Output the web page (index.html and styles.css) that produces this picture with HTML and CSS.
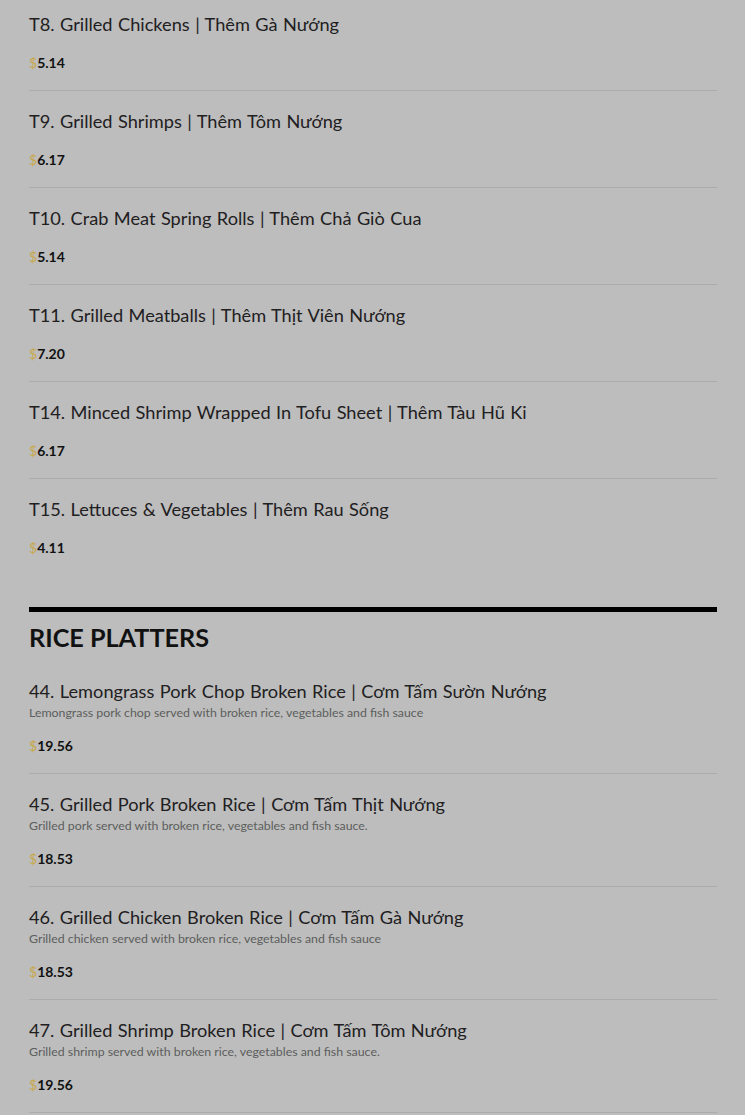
FILE: index.html
```html
<!DOCTYPE html>
<html lang="en">
<head>
<meta charset="utf-8">
<title>Menu</title>
<link rel="stylesheet" href="styles.css">
</head>
<body>
<main class="menu">
  <section class="section">
    <div class="item item--first">
      <div class="item-title">T8. Grilled Chickens | Thêm Gà Nướng</div>
      <div class="price"><span class="cur">$</span>5.14</div>
    </div>
    <div class="item">
      <div class="item-title">T9. Grilled Shrimps | Thêm Tôm Nướng</div>
      <div class="price"><span class="cur">$</span>6.17</div>
    </div>
    <div class="item">
      <div class="item-title">T10. Crab Meat Spring Rolls | Thêm Chả Giò Cua</div>
      <div class="price"><span class="cur">$</span>5.14</div>
    </div>
    <div class="item">
      <div class="item-title">T11. Grilled Meatballs | Thêm Thịt Viên Nướng</div>
      <div class="price"><span class="cur">$</span>7.20</div>
    </div>
    <div class="item">
      <div class="item-title">T14. Minced Shrimp Wrapped In Tofu Sheet | Thêm Tàu Hũ Ki</div>
      <div class="price"><span class="cur">$</span>6.17</div>
    </div>
    <div class="item item--last">
      <div class="item-title">T15. Lettuces &amp; Vegetables | Thêm Rau Sống</div>
      <div class="price"><span class="cur">$</span>4.11</div>
    </div>
  </section>
  <section class="section section--titled">
    <h2 class="section-title">RICE PLATTERS</h2>
    <div class="item item--top">
      <div class="item-title">44. Lemongrass Pork Chop Broken Rice | Cơm Tấm Sườn Nướng</div>
      <div class="item-desc">Lemongrass pork chop served with broken rice, vegetables and fish sauce</div>
      <div class="price"><span class="cur">$</span>19.56</div>
    </div>
    <div class="item">
      <div class="item-title">45. Grilled Pork Broken Rice | Cơm Tấm Thịt Nướng</div>
      <div class="item-desc">Grilled pork served with broken rice, vegetables and fish sauce.</div>
      <div class="price"><span class="cur">$</span>18.53</div>
    </div>
    <div class="item">
      <div class="item-title">46. Grilled Chicken Broken Rice | Cơm Tấm Gà Nướng</div>
      <div class="item-desc">Grilled chicken served with broken rice, vegetables and fish sauce</div>
      <div class="price"><span class="cur">$</span>18.53</div>
    </div>
    <div class="item item--end">
      <div class="item-title">47. Grilled Shrimp Broken Rice | Cơm Tấm Tôm Nướng</div>
      <div class="item-desc">Grilled shrimp served with broken rice, vegetables and fish sauce.</div>
      <div class="price"><span class="cur">$</span>19.56</div>
    </div>
  </section>
</main>
</body>
</html>
```
FILE: styles.css
```css
html, body {
  margin: 0;
  padding: 0;
  background: #bcbdbc;
}
body {
  font-family: "Lato", "Open Sans", sans-serif;
  color: #1f201f;
}
.menu {
  width: 688px;
  padding: 0 0 0 29px;
}
.section {
  display: flex;
  flex-direction: column;
}
.item {
  border-top: 1px solid #abacab;
  padding: 18px 0 19px;
  display: flex;
  flex-direction: column;
}
.item--first {
  border-top: none;
  padding-top: 12px;
}
.item--top {
  border-top: none;
  padding-top: 26px;
}
.item--last {
  padding-bottom: 0;
}
.item--end {
  border-bottom: 1px solid #abacab;
}
.item-title {
  font-size: 18.2px;
  line-height: 24px;
  word-spacing: 0.8px;
  color: #1f201f;
  white-space: nowrap;
}
.item-desc {
  margin-top: 2px;
  font-size: 12.35px;
  line-height: 16px;
  color: #5d5e5d;
  white-space: nowrap;
}
.price {
  margin-top: 19px;
  font-size: 14px;
  line-height: 16px;
  font-weight: 700;
  color: #111;
}
.item-desc + .price {
  margin-top: 17px;
}
.cur {
  color: #c8a84a;
  font-weight: 400;
}
.section--titled {
  margin-top: 51px;
  border-top: 5px solid #000;
}
.section-title {
  margin: 9px 0 0;
  font-size: 25.2px;
  line-height: 32px;
  font-weight: 700;
  color: #111;
}
```
